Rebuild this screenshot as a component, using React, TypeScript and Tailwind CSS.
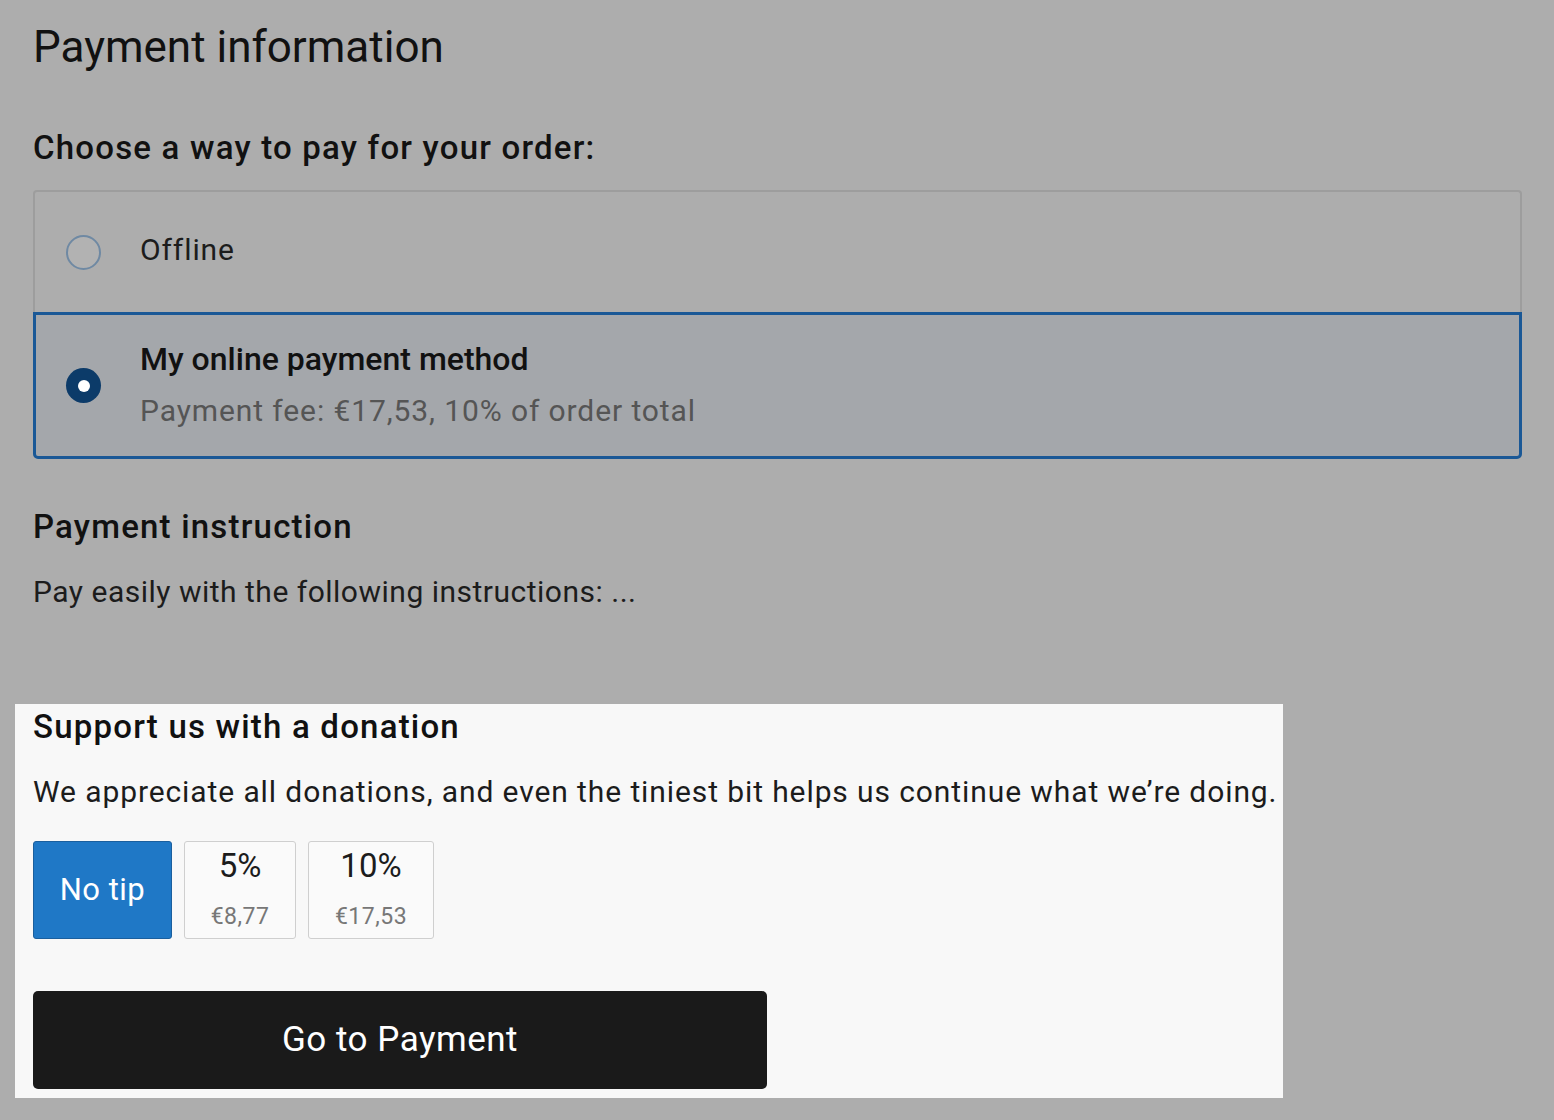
const font = { fontFamily: '"Roboto", "Liberation Sans", Arial, sans-serif' };

function Radio({ checked }: { checked: boolean }) {
    if (checked) {
        return (
            <div className='w-[35px] h-[35px] rounded-full bg-[#0c3b69] flex items-center justify-center shrink-0'>
                <div className='w-[12px] h-[12px] rounded-full bg-white'></div>
            </div>
        )
    }
    return <div className='w-[35px] h-[35px] rounded-full border-2 border-[#6f89a3] bg-[#b2b2b2] shrink-0'></div>
}

function TipButton({ pct, amount, width }: { pct: string; amount: string; width: string }) {
    return (
        <button className={`${width} h-[98px] flex flex-col items-center justify-start pt-[6px] border-[1.5px] border-[#cfcfcf] bg-[#fafafa] rounded-[3px]`}>
            <span className='text-[33px] leading-[36px] text-[#1c1c1c]'>{pct}</span>
            <span className='text-[23px] leading-[26px] tracking-[0.5px] text-[#777777] mt-[20px]'>{amount}</span>
        </button>
    )
}

export default function App() {
    return (
        <div className='min-h-[1120px] w-full bg-[#adadad] text-[#1c1c1c]' style={font}>
            <div className='px-[33px] pt-[21px]'>
                <h1 className='text-[44px] leading-[52px] text-[#111111]'>Payment information</h1>
                <h2 className='mt-[55px] text-[33px] leading-[40px] font-medium text-[#111111] tracking-[1.2px]'>Choose a way to pay for your order:</h2>

                <div className='mt-[22px] w-[1489px] flex flex-col'>
                    <div className='h-[122px] flex items-center border-[2px] border-b-0 border-[#9d9d9d] rounded-t-[4px] pl-[31px]'>
                        <Radio checked={false} />
                        <span className='ml-[39px] text-[30px] leading-[40px] tracking-[0.9px] -mt-[5px]'>Offline</span>
                    </div>
                    <div className='h-[147px] flex items-center border-[3px] border-[#1a5896] bg-[#a4a7ab] rounded-b-[5px] pl-[30px]'>
                        <Radio checked={true} />
                        <div className='ml-[39px] flex flex-col -mt-[2px]'>
                            <span className='text-[32px] leading-[40px] font-medium text-[#111111]'>My online payment method</span>
                            <span className='mt-[12px] text-[30px] leading-[40px] tracking-[0.9px] text-[#555555]'>Payment fee: €17,53, 10% of order total</span>
                        </div>
                    </div>
                </div>

                <h3 className='mt-[48px] text-[33px] leading-[40px] font-medium text-[#111111] tracking-[1.2px]'>Payment instruction</h3>
                <p className='mt-[25px] text-[30px] leading-[40px] tracking-[0.5px]'>Pay easily with the following instructions: ...</p>
            </div>

            <div className='mt-[92px] ml-[15px] w-[1268px] bg-[#f8f8f8] px-[18px] pt-[3px] pb-[9px]'>
                <h3 className='text-[33px] leading-[40px] font-medium text-[#111111] tracking-[1.2px]'>Support us with a donation</h3>
                <p className='mt-[25px] text-[30px] leading-[40px] tracking-[0.9px] whitespace-nowrap'>We appreciate all donations, and even the tiniest bit helps us continue what we’re doing.</p>
                <div className='mt-[29px] flex gap-[12px]'>
                    <button className='w-[139px] h-[98px] bg-[#1f78c6] border border-[#1a5f9e] rounded-[3px] text-white text-[31px] leading-[40px] tracking-[0.5px]'>No tip</button>
                    <TipButton pct='5%' amount='€8,77' width='w-[112px]' />
                    <TipButton pct='10%' amount='€17,53' width='w-[126px]' />
                </div>
                <button className='mt-[52px] w-[734px] h-[98px] bg-[#1a1a1a] rounded-[5px] text-white text-[35px] leading-[40px] tracking-[0.5px]'>Go to Payment</button>
            </div>
        </div>
    )
}
